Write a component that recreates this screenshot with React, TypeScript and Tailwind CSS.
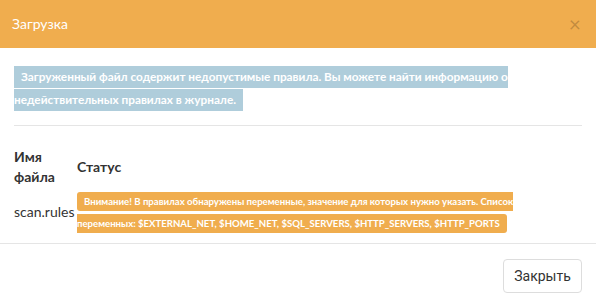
import React from "react";

export default function App() {
  return (
    <div className="w-[596px] h-[305px] bg-white font-['Lato','Noto_Sans',sans-serif] text-[#333] overflow-hidden">
      <div className="h-[48px] bg-[#f0ad4e] flex items-center justify-between pl-[12px] pr-[15px]">
        <span className="text-white text-[14px] leading-none">Загрузка</span>
        <span className="text-[21px] leading-none text-black/20 -mt-[2px]">×</span>
      </div>
      <div className="px-[14px] pt-[16px]">
        <div className="leading-[21px] h-[42px] whitespace-nowrap">
          <span className="bg-[#afcddb] text-white font-bold text-[11.8px] px-[7px] pt-[3px] pb-[4px]">
            Загруженный файл содержит недопустимые правила. Вы можете найти информацию о
            <br />
            недействительных правилах в журнале.
          </span>
        </div>
        <div className="mt-[19px] border-t border-[#e5e5e5]" />
        <div className="grid grid-cols-[63px_1fr] items-center mt-[21px]">
          <div className="font-bold text-[14px] leading-[20px]">
            Имя
            <br />
            файла
          </div>
          <div className="font-bold text-[14px] leading-[20px]">Статус</div>
          <div className="text-[14px] mt-[2px]">scan.rules</div>
          <div className="leading-[19px] mt-[2px] whitespace-nowrap">
            <span className="bg-[#f0ad4e] text-white font-bold text-[9.6px] px-[7px] pt-[4px] pb-[4px] rounded-[3px]">
              Внимание! В правилах обнаружены переменные, значение для которых нужно указать. Список
              <br />
              переменных: $EXTERNAL_NET, $HOME_NET, $SQL_SERVERS, $HTTP_SERVERS, $HTTP_PORTS
            </span>
          </div>
        </div>
      </div>
      <div className="mt-[10px] border-t border-[#e5e5e5] flex justify-end pt-[15px] pr-[14px]">
        <button className="h-[34px] w-[79px] border border-[#ddd] rounded-[4px] bg-white text-[14px] text-[#333] font-['Roboto',sans-serif]">
          Закрыть
        </button>
      </div>
    </div>
  );
}
